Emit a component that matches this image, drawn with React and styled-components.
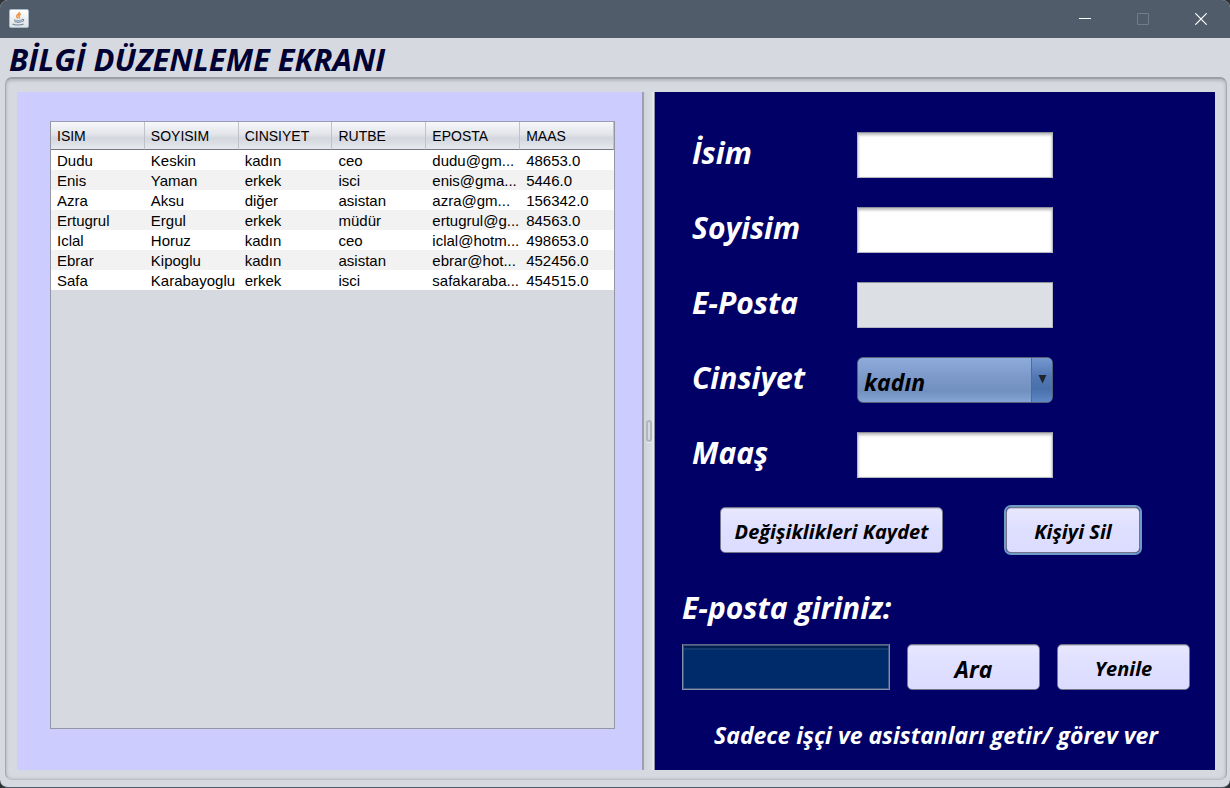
import React from 'react';
import styled, { createGlobalStyle, css } from 'styled-components';

const GlobalStyle = createGlobalStyle`
  * { box-sizing: border-box; }
  body { margin: 0; background: #2f3235; font-family: 'Open Sans', 'Noto Sans', sans-serif; }
`;

const Window = styled.div`
  display: flex;
  flex-direction: column;
  min-height: 100vh;
  background: #d6d9e0;
  border-radius: 8px;
  border-bottom: 1px solid #505c69;
  overflow: hidden;
`;

const TitleBar = styled.header`
  display: flex;
  align-items: center;
  justify-content: space-between;
  height: 38px;
  padding-left: 9px;
  background: #505c69;
`;

const WindowControls = styled.div`
  display: flex;
  align-self: stretch;
`;

const ControlButton = styled.button`
  display: flex;
  align-items: center;
  justify-content: center;
  width: 58px;
  padding: 0;
  border: 0;
  background: none;
  color: ${(p) => (p.disabled ? '#717d8a' : '#ffffff')};
`;

const Heading = styled.h1`
  height: 39px;
  margin: 0;
  padding-left: 9px;
  color: #000033;
  font-size: 31px;
  font-style: italic;
  font-weight: 700;
  line-height: 42px;
  white-space: nowrap;
`;

const Frame = styled.main`
  display: grid;
  flex: 1;
  grid-template-columns: minmax(0, 625fr) 13px minmax(0, 560fr);
  margin: 0 3px 7px 5px;
  padding: 13px 11px 9px 11px;
  border: 1px solid #a5a8ae;
  border-top: 2px solid #9b9ea3;
  border-bottom-color: #bcbfc5;
  border-radius: 7px;
  box-shadow: inset 0 2px 3px #b9bcc1, inset 1px 0 3px #c3c6cc, inset -1px 0 3px #c3c6cc;
`;

const ListPane = styled.section`
  display: flex;
  min-width: 0;
  padding: 29px 27px 41px 33px;
  background: #ccccff;
`;

const Divider = styled.div`
  display: flex;
  align-items: center;
  justify-content: center;
  border-left: 2px solid #9c9fb0;
  border-right: 1px solid #8c90a0;
  background: linear-gradient(90deg, #d1d4da, #d8dbe2 70%, #eceef2);
`;

const Grip = styled.span`
  width: 6px;
  height: 22px;
  border: 2px solid #b2b5bc;
  border-radius: 3px;
  box-shadow: 0 1px 0 #eff1f5;
`;

const FormPane = styled.section`
  display: flex;
  flex-direction: column;
  min-width: 0;
  padding: 40px 25px 18px 27px;
  background: #000066;
`;

const TableScroll = styled.div`
  flex: 1;
  min-width: 0;
  border: 1px solid #9297a1;
  border-top-color: #9a9cb5;
  background: #d6d9e0;
`;

const Table = styled.table`
  width: 100%;
  table-layout: fixed;
  border-collapse: separate;
  border-spacing: 0;
  color: #000000;
  font-family: 'Liberation Sans', Arial, sans-serif;
`;

const HeadCell = styled.th`
  height: 28px;
  padding: 0 0 0 6px;
  border-right: 1px solid #bfc2c9;
  border-bottom: 1px solid #74777e;
  background: linear-gradient(#f7f8fa, #e3e5ea 45%, #d3d6dd 60%, #e6e9ee);
  font-size: 14px;
  font-weight: 400;
  text-align: left;
`;

const BodyRow = styled.tr`
  background: #ffffff;
  &:nth-child(even) { background: #f2f2f2; }
`;

const BodyCell = styled.td`
  height: 20px;
  padding: 2px 0 0 6px;
  font-size: 15px;
  line-height: 18px;
  white-space: nowrap;
`;

const Fields = styled.div`
  display: grid;
  grid-template-columns: 165px 196px;
  grid-auto-rows: 46px;
  row-gap: 29px;
  padding-left: 10px;
`;

const Label = styled.label`
  color: #ffffff;
  font-size: 30px;
  font-style: italic;
  font-weight: 700;
  line-height: 42px;
  white-space: nowrap;
`;

const TextInput = styled.input`
  width: 100%;
  height: 46px;
  padding: 0 6px;
  border: 1px solid #b4b6c2;
  border-top-color: #8d8f99;
  border-radius: 0;
  background: ${(p) => (p.disabled ? '#dce0e4' : '#ffffff')};
  box-shadow: ${(p) => (p.disabled ? 'none' : 'inset 0 2px 3px #b8b8b8, inset 0 0 1px #d0d0d0')};
  font: italic 700 20px 'Open Sans', sans-serif;
`;

const SearchInput = styled(TextInput)`
  width: 208px;
  border: 1px solid #8290a8;
  border-top-color: #5c6880;
  background: #002b6b;
  box-shadow: inset 0 0 0 1px #3c5580, inset 0 3px 0 #001e50, inset 0 5px 0 #12396f;
  color: #ffffff;
`;

const SelectBox = styled.div`
  position: relative;
  height: 46px;
  overflow: hidden;
  border: 1px solid #566078;
  border-radius: 6px;
  background: linear-gradient(#8eacdb, #7d9acb 40%, #7190bf 75%, #84a5d6);
`;

const Select = styled.select`
  width: 100%;
  height: 100%;
  padding: 4px 26px 0 6px;
  border: 0;
  appearance: none;
  background: none;
  color: #000000;
  font: italic 700 23px 'Open Sans', sans-serif;
`;

const SelectArrow = styled.span`
  position: absolute;
  top: 0;
  right: 0;
  bottom: 0;
  display: flex;
  justify-content: center;
  width: 21px;
  padding-top: 17px;
  border-left: 1px solid #4a6ca5;
  background: linear-gradient(#7598cf, #5479b5 40%, #4870ab 70%, #5f88c6);
  pointer-events: none;
`;

const Button = styled.button`
  height: 46px;
  width: ${(p) => p.$width}px;
  padding: 4px 0 0;
  border: 1px solid #75758c;
  border-radius: 5px;
  background: linear-gradient(#e8e8ff, #dfdfff 45%, #dcdcff);
  box-shadow: inset 0 1px 0 #c4c4d8;
  color: #000000;
  font-family: inherit;
  font-size: ${(p) => (p.$large ? 23 : 20)}px;
  font-style: italic;
  font-weight: 700;
  line-height: 26px;
  white-space: nowrap;
  ${(p) => p.$focused && css`
    outline: 2px solid #709bc6;
  `}
`;

const Actions = styled.div`
  display: flex;
  gap: 63px;
  margin-top: 29px;
  padding-left: 38px;
`;

const SearchArea = styled.div`
  display: flex;
  flex-direction: column;
  margin-top: 34px;
`;

const SearchRow = styled.div`
  display: flex;
  gap: 17px;
  margin-top: 15px;
`;

const FilterLink = styled.a`
  align-self: center;
  margin-top: 31px;
  color: #ffffff;
  font-size: 23px;
  font-style: italic;
  font-weight: 700;
  line-height: 28px;
  text-decoration: none;
  white-space: nowrap;
`;

const columns = ['ISIM', 'SOYISIM', 'CINSIYET', 'RUTBE', 'EPOSTA', 'MAAS'];
const people = [
  ['Dudu', 'Keskin', 'kadın', 'ceo', 'dudu@gm...', '48653.0'],
  ['Enis', 'Yaman', 'erkek', 'isci', 'enis@gma...', '5446.0'],
  ['Azra', 'Aksu', 'diğer', 'asistan', 'azra@gm...', '156342.0'],
  ['Ertugrul', 'Ergul', 'erkek', 'müdür', 'ertugrul@g...', '84563.0'],
  ['Iclal', 'Horuz', 'kadın', 'ceo', 'iclal@hotm...', '498653.0'],
  ['Ebrar', 'Kipoglu', 'kadın', 'asistan', 'ebrar@hot...', '452456.0'],
  ['Safa', 'Karabayoglu', 'erkek', 'isci', 'safakaraba...', '454515.0'],
];

function JavaIcon() {
  return (
    <svg width="20" height="20" viewBox="0 0 20 20" aria-hidden="true">
      <defs>
        <linearGradient id="tile" x1="0" y1="0" x2="0" y2="1">
          <stop offset="0" stopColor="#ffffff" />
          <stop offset="1" stopColor="#dfe1e3" />
        </linearGradient>
      </defs>
      <rect x="0.5" y="0.5" width="19" height="18" rx="1.5" fill="url(#tile)" stroke="#a9bac6" />
      <path d="M10.300 3c.7 2-3.300 2.600-2.600 4.600.2.700 1 1.200 1.200 2M12 5c-2 .8-2.600 1.600-1.700 2.700.4.600.2 1.100-.4 1.700" fill="none" stroke="#ee9347" strokeWidth="1.500" />
      <path d="M5 10.300c2 .9 6.500.9 8 0l-.6 2.700c-1.500 1.200-5.300 1.200-6.800 0z" fill="#7893a8" />
      <path d="M6 11.800c1.800.5 4.700.5 6.300 0" fill="none" stroke="#e4ebf0" strokeWidth="0.700" />
      <path d="M13 10.500c2.300-.6 2.200 1.800-.4 2.200M3.500 15c1.800 1.300 9 1.300 11 0" fill="none" stroke="#6886a0" strokeWidth="1.100" />
    </svg>
  );
}

export default function App() {
  return (
    <>
      <GlobalStyle />
      <Window>
        <TitleBar>
          <JavaIcon />
          <WindowControls>
            <ControlButton aria-label="Simge durumuna küçült">
              <svg width="12" height="12" viewBox="0 0 12 12"><path d="M0 5.500h12" stroke="currentColor" /></svg>
            </ControlButton>
            <ControlButton aria-label="Ekranı kapla" disabled>
              <svg width="12" height="12" viewBox="0 0 12 12"><rect x="0.500" y="0.500" width="11" height="11" rx="0.500" fill="none" stroke="currentColor" /></svg>
            </ControlButton>
            <ControlButton aria-label="Kapat">
              <svg width="12" height="12" viewBox="0 0 12 12"><path d="M0.300 0.300l11.400 11.400M11.700 0.300L0.300 11.700" stroke="currentColor" strokeWidth="1.200" /></svg>
            </ControlButton>
          </WindowControls>
        </TitleBar>
        <Heading>BİLGİ DÜZENLEME EKRANI</Heading>
        <Frame>
          <ListPane>
            <TableScroll>
              <Table>
                <thead>
                  <tr>{columns.map((name) => <HeadCell key={name} scope="col">{name}</HeadCell>)}</tr>
                </thead>
                <tbody>
                  {people.map((person) => (
                    <BodyRow key={person[0]}>
                      {person.map((value, i) => <BodyCell key={columns[i]}>{value}</BodyCell>)}
                    </BodyRow>
                  ))}
                </tbody>
              </Table>
            </TableScroll>
          </ListPane>
          <Divider role="separator" aria-orientation="vertical"><Grip /></Divider>
          <FormPane>
            <Fields>
              <Label htmlFor="isim">İsim</Label>
              <TextInput id="isim" />
              <Label htmlFor="soyisim">Soyisim</Label>
              <TextInput id="soyisim" />
              <Label htmlFor="eposta">E-Posta</Label>
              <TextInput id="eposta" disabled />
              <Label htmlFor="cinsiyet">Cinsiyet</Label>
              <SelectBox>
                <Select id="cinsiyet" defaultValue="kadın">
                  <option>kadın</option>
                  <option>erkek</option>
                  <option>diğer</option>
                </Select>
                <SelectArrow>
                  <svg width="9" height="9" viewBox="0 0 9 9" aria-hidden="true"><path d="M0.500 0h8L4.500 8.500z" fill="#20242c" /></svg>
                </SelectArrow>
              </SelectBox>
              <Label htmlFor="maas">Maaş</Label>
              <TextInput id="maas" />
            </Fields>
            <Actions>
              <Button type="button" $width={223}>Değişiklikleri Kaydet</Button>
              <Button type="button" $width={134} $focused>Kişiyi Sil</Button>
            </Actions>
            <SearchArea>
              <Label htmlFor="arama">E-posta giriniz:</Label>
              <SearchRow>
                <SearchInput id="arama" />
                <Button type="button" $width={133} $large>Ara</Button>
                <Button type="button" $width={133}>Yenile</Button>
              </SearchRow>
            </SearchArea>
            <FilterLink href="#gorev">Sadece işçi ve asistanları getir/ görev ver</FilterLink>
          </FormPane>
        </Frame>
      </Window>
    </>
  );
}
